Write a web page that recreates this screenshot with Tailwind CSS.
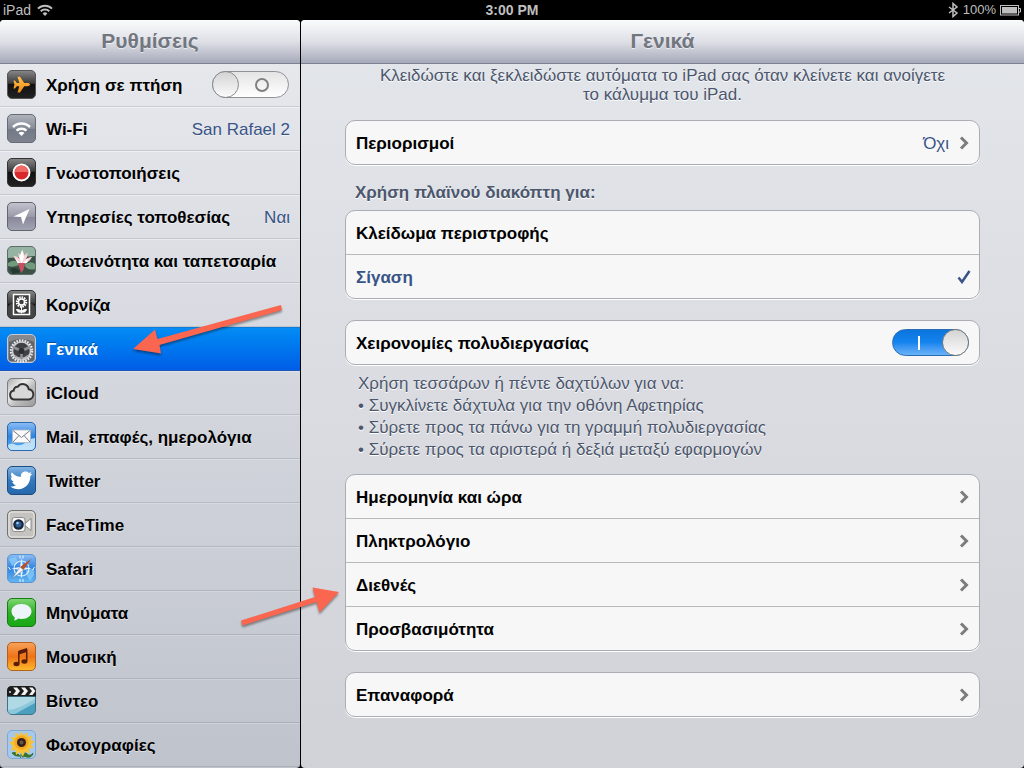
<!DOCTYPE html>
<html lang="el">
<head>
  <meta charset="UTF-8">
  <title>Ρυθμίσεις - Γενικά</title>
  <meta name="viewport" content="width=device-width, initial-scale=1.0">
  <script src="https://cdn.jsdelivr.net/npm/@tailwindcss/browser@4"></script>
</head>
<body class="bg-black h-screen flex flex-col overflow-hidden font-['Liberation_Sans',Arial,sans-serif] text-[17px] text-black">

  <!-- Gradients shared by the icons -->
  <svg class="absolute w-0 h-0" aria-hidden="true">
    <defs>
      <linearGradient id="black" x2="0" y2="1"><stop offset="0" stop-color="#888"/><stop offset=".45" stop-color="#3c3c3c"/><stop offset=".5" stop-color="#111"/><stop offset="1" stop-color="#222"/></linearGradient>
      <linearGradient id="gray" x2="0" y2="1"><stop offset="0" stop-color="#b0b4bd"/><stop offset=".5" stop-color="#868b96"/><stop offset=".52" stop-color="#737986"/><stop offset="1" stop-color="#7d828e"/></linearGradient>
      <linearGradient id="lilac" x2="0" y2="1"><stop offset="0" stop-color="#c3c4cf"/><stop offset=".5" stop-color="#9a9ba9"/><stop offset=".52" stop-color="#86889a"/><stop offset="1" stop-color="#a3a5b3"/></linearGradient>
      <linearGradient id="silver" x2="1" y2="1"><stop offset="0" stop-color="#aaa"/><stop offset=".35" stop-color="#eee"/><stop offset=".6" stop-color="#bbb"/><stop offset="1" stop-color="#999"/></linearGradient>
      <linearGradient id="blue" x2="0" y2="1"><stop offset="0" stop-color="#85b6e6"/><stop offset=".5" stop-color="#3379bd"/><stop offset="1" stop-color="#2667ab"/></linearGradient>
      <linearGradient id="sky" x2="0" y2="1"><stop offset="0" stop-color="#8cbef5"/><stop offset=".5" stop-color="#2f83e0"/><stop offset="1" stop-color="#63b9f5"/></linearGradient>
      <linearGradient id="green" x2="0" y2="1"><stop offset="0" stop-color="#7fd873"/><stop offset=".5" stop-color="#30ae28"/><stop offset="1" stop-color="#17a813"/></linearGradient>
      <linearGradient id="orange" x2="0" y2="1"><stop offset="0" stop-color="#f7a35a"/><stop offset=".5" stop-color="#ee7418"/><stop offset="1" stop-color="#fdba2c"/></linearGradient>
      <linearGradient id="plane" x2="0" y2="1"><stop offset="0" stop-color="#ffc04d"/><stop offset="1" stop-color="#f08a12"/></linearGradient>
    </defs>
  </svg>

  <!-- Status bar -->
  <div class="h-5 shrink-0 grid grid-cols-3 items-center px-[3px] text-sm leading-5 font-bold text-[#bfbfbf]">
    <div class="flex items-center gap-1.5">
      <span class="font-normal">iPad</span>
      <svg class="w-4 h-3" viewBox="0 0 16 12" fill="none" stroke="#bfbfbf" stroke-width="2"><path d="M1 4.600a10 10 0 0 1 14 0M3.700 7.300a6.200 6.200 0 0 1 8.600 0"/><path d="M8 12l-2.400-2.600a3.500 3.500 0 0 1 4.800 0z" fill="#bfbfbf" stroke="none"/></svg>
    </div>
    <span class="text-center">3:00 PM</span>
    <div class="flex items-center justify-end gap-1">
      <svg class="w-3 h-4" viewBox="0 0 12 16" fill="none" stroke="#bfbfbf" stroke-width="1.500"><path d="M2 5l8 6-4 3.500v-13L10 5l-8 6"/></svg>
      <span class="text-[13px] font-normal">100%</span>
      <svg class="w-[21px] h-[11px]" viewBox="0 0 21 11"><rect x=".5" y=".5" width="18" height="9.500" fill="none" stroke="#bfbfbf"/><rect x="2" y="2" width="15" height="6.500" fill="#bfbfbf"/><path d="M19 3.500h1.500v3.500H19" fill="none" stroke="#bfbfbf"/></svg>
    </div>
  </div>

  <div class="flex flex-1 min-h-0">

    <!-- Sidebar -->
    <aside class="w-[301px] shrink-0 border-r border-black">
      <div class="h-full flex flex-col overflow-hidden rounded-sm bg-linear-to-b from-[#e8eaee] to-[#bfc3cc]">
        <header class="relative z-10 h-11 shrink-0 flex items-center justify-center pb-0.5 border-b border-[#7c8095] bg-linear-to-b from-[#fafbfb] via-[#dfe0e7] to-[#a6a9b9]">
          <h1 class="text-[21px] font-bold text-[#71767f] [text-shadow:0_1px_0_#ffffff99]">Ρυθμίσεις</h1>
        </header>
        <nav class="-mt-px font-bold [text-shadow:0_1px_0_#ffffff80] [&_span]:pt-0.5 [&_a]:pb-px">
          <div class="h-11 flex items-center gap-2.5 pl-[7px] pr-[11px] border-b border-[#c9ccd2]">
            <svg class="size-[29px]" viewBox="0 0 29 29"><rect x=".5" y=".5" width="28" height="28" rx="4.500" fill="url(#black)" stroke="#555"/><path d="M23 14.600c0 1-1.200 1.700-2.500 1.700h-3.300L13 22.500h-2.500l1.800-6.200H9.800L8 18.600H6.500l.9-4L6.500 10.600H8l1.800 2.300h2.500L10.500 6.700H13l4.200 6.200h3.300c1.300 0 2.500.7 2.500 1.700z" fill="url(#plane)"/></svg>
            <label for="airplane" class="flex-1 pt-0.5">Χρήση σε πτήση</label>
            <input id="airplane" type="checkbox" role="switch" class="appearance-none relative w-[77px] h-[27px] rounded-full border border-[#8f9196] bg-linear-to-b from-[#e4e4e4] to-white before:absolute before:-left-px before:-top-px before:size-[27px] before:rounded-full before:border before:border-[#8b8b8b] before:bg-linear-to-b before:from-[#d4d4d4] before:to-[#fbfbfb] after:absolute after:right-[19px] after:top-[6px] after:size-[14px] after:rounded-full after:border-2 after:border-[#808080]">
          </div>
          <a href="#" class="h-11 flex items-center gap-2.5 pl-[7px] pr-2.5 border-t border-t-[#eef0f3] border-b border-b-[#c5c8cf]">
            <svg class="size-[29px]" viewBox="0 0 29 29"><rect x=".5" y=".5" width="28" height="28" rx="4.500" fill="url(#gray)" stroke="#666b75"/><g fill="none" stroke="#fff" stroke-width="2.500"><path d="M6 13a12 12 0 0 1 17 0M9.500 16.700a7.200 7.200 0 0 1 10 0"/></g><path d="M14.500 22l-3-3a4.200 4.200 0 0 1 6 0z" fill="#fff"/></svg>
            <span class="flex-1">Wi-Fi</span>
            <span class="font-normal text-[#385487]">San Rafael 2</span>
          </a>
          <a href="#" class="h-11 flex items-center gap-2.5 pl-[7px] pr-2.5 border-t border-t-[#eef0f3] border-b border-b-[#c5c8cf]">
            <svg class="size-[29px]" viewBox="0 0 29 29"><rect x=".5" y=".5" width="28" height="28" rx="4.500" fill="url(#black)" stroke="#333"/><circle cx="14.500" cy="14.500" r="8" fill="#d9282b" stroke="#fff" stroke-width="2"/><path d="M8 14a6.500 6.500 0 0 1 13 0z" fill="#f06a68"/></svg>
            <span>Γνωστοποιήσεις</span>
          </a>
          <a href="#" class="h-11 flex items-center gap-2.5 pl-[7px] pr-2.5 border-t border-t-[#ebedf0] border-b border-b-[#c3c6cd]">
            <svg class="size-[29px]" viewBox="0 0 29 29"><rect x=".5" y=".5" width="28" height="28" rx="4.500" fill="url(#lilac)" stroke="#62666f"/><path d="M22.500 7L16 22.500l-2-7.500-7.500-.5z" fill="#fff"/></svg>
            <span class="flex-1">Υπηρεσίες τοποθεσίας</span>
            <span class="font-normal text-[#385487]">Ναι</span>
          </a>
          <a href="#" class="h-11 flex items-center gap-2.5 pl-[7px] pr-2.5 border-t border-t-[#e9ebee] border-b border-b-[#c1c4cb]">
            <svg class="size-[29px]" viewBox="0 0 29 29"><rect x=".5" y=".5" width="28" height="28" rx="4.500" fill="#3c5145" stroke="#5e6e66"/><path d="M1 5q0-4 4-4h19q4 0 4 4v5L1 12z" fill="#94b3a2"/><path d="M1 17q7-5 13 1-7 4-13 2zM17 19q7-5 11-1v5q-7 2-11-4z" fill="#719b7c"/><path d="M3 23q6-3 11 3l-8 2z" fill="#243a33"/><path d="M14.500 18Q9 17 6.500 10q4 0 6 3-1.500-3-1-6l2.500 2.500 1.500-6 2 6 3-3q0 4-1.500 7 2.500-3 6-2.500-3 6-9.500 7z" fill="#f7d3d8"/><path d="M14.500 18l-2-7 2.500-7 2 7zM9 13l5.500 5-4-1zM21 12l-6 6 5-1z" fill="#fff"/><path d="M11 17h7l-1.500 7-2.500 3z" fill="#c84f62"/></svg>
            <span>Φωτεινότητα και ταπετσαρία</span>
          </a>
          <a href="#" class="h-11 flex items-center gap-2.5 pl-[7px] pr-2.5 border-t border-t-[#e6e8ec] border-b border-b-[#bfc3ca]">
            <svg class="size-[29px]" viewBox="0 0 29 29"><rect x=".5" y=".5" width="28" height="28" rx="4.500" fill="url(#black)" stroke="#333"/><rect x="1" y="14" width="27" height="14" rx="4" fill="#444"/><rect x="6.500" y="4.500" width="16" height="20" fill="#3c3c3c" stroke="#fff" stroke-width="1.500"/><circle cx="14.500" cy="12" r="4.500" fill="none" stroke="#fff" stroke-width="2.500" stroke-dasharray="1.500 .8"/><circle cx="14.500" cy="12" r="3" fill="none" stroke="#fff" stroke-width="1.500"/><path d="M14.500 16v7.500M14.500 22q-4 1-5-2.500 4-.5 5 2.500 1-3 5-2.500-1 3.500-5 2.500" fill="#fff" stroke="#fff"/></svg>
            <span>Κορνίζα</span>
          </a>
          <a href="#" aria-current="page" class="h-11 flex items-center gap-2.5 pl-[7px] pr-2.5 border-t border-t-[#0f7bdb] border-b border-b-[#1d56b5] bg-linear-to-b from-[#058cf5] to-[#015de6] text-white [text-shadow:0_-1px_0_#00000066]">
            <svg class="size-[29px]" viewBox="0 0 29 29"><rect x=".5" y=".5" width="28" height="28" rx="4.500" fill="#85888e" stroke="#c8cbd1"/><path d="M2 8q12-6 25 0v17q0 2-3 2H5q-3 0-3-2z" fill="#606368"/><circle cx="14.500" cy="17" r="10.500" fill="none" stroke="#eceded" stroke-width="2.500" stroke-dasharray="1.600 1.150"/><circle cx="14.500" cy="17" r="9" fill="#3f4145" stroke="#cfd0d3" stroke-width="1.500"/><path d="M7 20q7 7 15 0l-4 5h-7z" fill="#b9bbbf"/><path d="M14.500 17L6 13M14.500 17L23 13M14.500 17v8" stroke="#8e9095" stroke-width="2.500"/><circle cx="14.500" cy="17" r="3" fill="#2d2e31"/></svg>
            <span>Γενικά</span>
          </a>
          <a href="#" class="h-11 flex items-center gap-2.5 pl-[7px] pr-2.5 border-t border-t-[#e0e3e8] border-b border-b-[#bbbfc6]">
            <svg class="size-[29px]" viewBox="0 0 29 29"><rect x=".5" y=".5" width="28" height="28" rx="4.500" fill="url(#silver)" stroke="#7d7d7d"/><path d="M7.500 21.500a4.500 4.500 0 0 1-.8-8.900 3.700 3.700 0 0 1 4.100-3.800 6 6 0 0 1 10.900 2.400 5.200 5.200 0 0 1 .3 10.300z" fill="#d8d8d8" stroke="#343434" stroke-width="2"/></svg>
            <span>iCloud</span>
          </a>
          <a href="#" class="h-11 flex items-center gap-2.5 pl-[7px] pr-2.5 border-t border-t-[#dde0e5] border-b border-b-[#b9bcc4]">
            <svg class="size-[29px]" viewBox="0 0 29 29"><rect x=".5" y=".5" width="28" height="28" rx="4.500" fill="url(#sky)" stroke="#2b69ae"/><path d="M1 23q4-3 8 0 5 1 9-2 3-4 10-5v7q0 5-5 5H6q-5 0-5-5z" fill="#d8effd" opacity=".8"/><path d="M5.500 8h18v12.500h-18z" fill="#fafafa" stroke="#aeb6c2" stroke-width=".8"/><path d="M6 8.500l8.500 7 8.500-7M6 20l6-6.500M23 20l-6-6.500" fill="none" stroke="#777d86"/></svg>
            <span>Mail, επαφές, ημερολόγια</span>
          </a>
          <a href="#" class="h-11 flex items-center gap-2.5 pl-[7px] pr-2.5 border-t border-t-[#dadde2] border-b border-b-[#b6bac2]">
            <svg class="size-[29px]" viewBox="0 0 29 29"><rect x=".5" y=".5" width="28" height="28" rx="4.500" fill="url(#blue)" stroke="#1c4d82"/><path d="M3.500 20.500c3 .2 4.300-.6 5.500-1.500-2-.2-3.200-1.500-3.700-3h1.500c-2-1-3-2.600-3-4.700l1.600.5C3.800 10 3.700 8 4.700 6.200c2.600 3 5.700 4.500 9.200 4.700-.4-3 1.600-5.400 4.400-5.400 1.500 0 2.600.5 3.500 1.400l2.700-1-1.500 2.300 2.500-.5-2.200 2.300c.2 7-4.500 13.200-12 13.200-3 0-5.700-1-7.800-2.700z" fill="#fff"/></svg>
            <span>Twitter</span>
          </a>
          <a href="#" class="h-11 flex items-center gap-2.5 pl-[7px] pr-2.5 border-t border-t-[#d7dadf] border-b border-b-[#b4b8c0]">
            <svg class="size-[29px]" viewBox="0 0 29 29"><rect x=".5" y=".5" width="28" height="28" rx="4.500" fill="#c4c3bf" stroke="#73726f"/><rect x="2" y="2" width="25" height="25" rx="3" fill="none" stroke="#e8e8e5"/><path d="M17 14.500l7-6v12z" fill="#fff" stroke="#777" stroke-width=".8"/><rect x="5" y="7.500" width="13" height="14" rx="2.500" fill="#f5f5f5" stroke="#777" stroke-width=".8"/><circle cx="11.500" cy="14.500" r="5.300" fill="#17263c"/><circle cx="11.500" cy="14.500" r="3" fill="#2d5e96"/><circle cx="10.500" cy="13" r="1.300" fill="#9ac5ee"/></svg>
            <span>FaceTime</span>
          </a>
          <a href="#" class="h-11 flex items-center gap-2.5 pl-[7px] pr-2.5 border-t border-t-[#d5d8dd] border-b border-b-[#b2b5be]">
            <svg class="size-[29px]" viewBox="0 0 29 29"><rect x=".5" y=".5" width="28" height="28" rx="4.500" fill="url(#sky)" stroke="#5a93cf"/><path d="M19 16l8-1v6l-4 6-3-5zM2 5l7-2 2 6-6 3z" fill="#8fd0f8" opacity=".7"/><circle cx="14.500" cy="14.500" r="7.500" fill="none" stroke="#d4edff" stroke-width="1.200"/><path d="M14.500 4l1.500 9 9 1.500-9 1.500-1.500 9-1.500-9-9-1.500 9-1.500z" fill="#e8f6ff"/><path d="M13 1.500v3M16 1.500v3M13 25v3M16 25v3M1.500 13l2 3M27.500 13l-2 3" stroke="#e8f6ff"/><path d="M24.500 4.500L16.500 16l-3.500-3z" fill="#b5532f"/><path d="M5 24.500L13 13l3.500 3z" fill="#f4f4f4" stroke="#6c7f95" stroke-width=".5"/></svg>
            <span>Safari</span>
          </a>
          <a href="#" class="h-11 flex items-center gap-2.5 pl-[7px] pr-2.5 border-t border-t-[#d3d6db] border-b border-b-[#b0b3bc]">
            <svg class="size-[29px]" viewBox="0 0 29 29"><rect x=".5" y=".5" width="28" height="28" rx="4.500" fill="url(#green)" stroke="#197b18"/><path d="M14.500 6c6 0 10 3.200 10 7.500s-4 7.500-10 7.500c-1.200 0-2.400-.2-3.500-.5-1 1.300-2.500 2-4.200 2 .7-.8 1.100-2 .9-3.300-2-1.400-3.200-3.500-3.200-5.700C4.500 9.200 8.500 6 14.500 6z" fill="#eef5fa"/></svg>
            <span>Μηνύματα</span>
          </a>
          <a href="#" class="h-11 flex items-center gap-2.5 pl-[7px] pr-2.5 border-t border-t-[#d1d4da] border-b border-b-[#aeb2bb]">
            <svg class="size-[29px]" viewBox="0 0 29 29"><rect x=".5" y=".5" width="28" height="28" rx="4.500" fill="url(#orange)" stroke="#b4611e"/><path d="M12 8.500l8-2.500v4l-8 2.500z" fill="#5a1d08"/><path d="M11.800 9v12.500M19.700 7v12" stroke="#5a1d08" stroke-width="1.500"/><ellipse cx="9.500" cy="22" rx="3" ry="2.200" fill="#5a1d08"/><ellipse cx="17.400" cy="19.500" rx="3" ry="2.200" fill="#5a1d08"/></svg>
            <span>Μουσική</span>
          </a>
          <a href="#" class="h-11 flex items-center gap-2.5 pl-[7px] pr-2.5 border-t border-t-[#cfd2d8] border-b border-b-[#acb0b9]">
            <svg class="size-[29px]" viewBox="0 0 29 29"><rect x=".5" y=".5" width="28" height="28" rx="4.500" fill="#4a9fbe" stroke="#3f7385"/><path d="M1 11h27v6L8 28H5q-4 0-4-4z" fill="#8cc8da"/><path d="M1 24q9 0 27-11v-2H1z" fill="#c5e5ec" opacity=".6"/><path d="M0 10.500V5q0-5 5-5h19q5 0 5 5v5.500z" fill="#1c1c1c"/><path d="M6 1.500h4l3 3.500-3 4H6l3-4zM14 1.500h4l3 3.500-3 4h-4l3-4zM22 1.500h3.500l3 3.500-3 4H22l3-4z" fill="#f1f1f1"/><circle cx="3" cy="6" r="1" fill="#ddd"/></svg>
            <span>Βίντεο</span>
          </a>
          <a href="#" class="h-11 flex items-center gap-2.5 pl-[7px] pr-2.5 border-t border-t-[#ced1d7] border-b border-b-[#acb0b9]">
            <svg class="size-[29px]" viewBox="0 0 29 29"><rect x=".5" y=".5" width="28" height="28" rx="4.500" fill="#a5c9ee" stroke="#7da7d4"/><path d="M14.500 16q1 6-1 12M13 26q-4-5-8-3 3 4 8 3M15 26q3-5 5-2 3 3 6-1-1 5-6 4-2-1-5 0" fill="#38742d" stroke="#38742d"/><path d="M14.500 1l2 4.500 4-3.500v5l5-1.500-2 4.500 4.500 1.500-4 3 3 3.500-5 .5.5 5-4.500-2-2 5-3-4.500-4 3-.5-5-5 .5 2.500-4.500L2 12.500 6.500 11l-3-4 5 .5L8 2l4.500 3.500z" fill="#f8c234"/><circle cx="14.500" cy="12.500" r="7" fill="#f4a81f"/><circle cx="14.500" cy="12.500" r="4.500" fill="#33211a"/><circle cx="14.500" cy="12.500" r="2" fill="#6a5547"/></svg>
            <span>Φωτογραφίες</span>
          </a>
        </nav>
      </div>
    </aside>

    <!-- Detail pane -->
    <main class="flex-1 min-w-0 overflow-hidden rounded-sm bg-linear-to-b from-[#e3e6eb] to-[#d1d2d7]">
      <header class="h-11 flex items-center justify-center pb-0.5 border-b border-[#7c8095] bg-linear-to-b from-[#fafbfb] via-[#dfe0e7] to-[#a6a9b9]">
        <h2 class="text-[21px] font-bold text-[#71767f] [text-shadow:0_1px_0_#ffffff99]">Γενικά</h2>
      </header>

      <div class="px-11 pt-0.5 [&_span]:pt-0.5">
        <p class="text-center leading-[19px] text-[#4c566c] [text-shadow:0_1px_0_#fff]">Κλειδώστε και ξεκλειδώστε αυτόματα το iPad σας όταν κλείνετε και ανοίγετε<br>το κάλυμμα του iPad.</p>

        <section class="mt-4 rounded-[10px] border border-[#abadb3] bg-[#f7f7f7] shadow-[0_1px_0_#fff]">
          <a href="#" class="h-[43px] flex items-center px-2.5">
            <span class="flex-1 font-bold">Περιορισμοί</span>
            <span class="mr-2.5 text-[#385487]">Όχι</span>
            <svg class="w-2.5 h-3.5" viewBox="0 0 10 14" fill="none" stroke="#7c7c7c" stroke-width="3"><path d="M2 1.500L7.500 7 2 12.500"/></svg>
          </a>
        </section>

        <fieldset>
          <legend class="pt-4 pb-[5px] pl-2.5 font-bold leading-6 text-[#4c566c] [text-shadow:0_1px_0_#fff]">Χρήση πλαϊνού διακόπτη για:</legend>
          <div class="rounded-[10px] border border-[#abadb3] bg-[#f7f7f7] shadow-[0_1px_0_#fff] font-bold">
            <label class="h-11 flex items-center pl-2.5 pr-2 border-b border-[#b8b9bd] has-checked:text-[#385487]">
              <span class="flex-1">Κλείδωμα περιστροφής</span>
              <input type="radio" name="side-switch" class="peer appearance-none">
              <svg class="hidden peer-checked:block w-3.5 h-3.5" viewBox="0 0 14 14" fill="none" stroke="#385487" stroke-width="2.500"><path d="M1.500 7.500L5 12 12.500 1"/></svg>
            </label>
            <label class="h-[43px] flex items-center pl-2.5 pr-2 has-checked:text-[#385487]">
              <span class="flex-1">Σίγαση</span>
              <input type="radio" name="side-switch" class="peer appearance-none" checked>
              <svg class="hidden peer-checked:block w-3.5 h-3.5" viewBox="0 0 14 14" fill="none" stroke="#385487" stroke-width="2.500"><path d="M1.500 7.500L5 12 12.500 1"/></svg>
            </label>
          </div>
        </fieldset>

        <section class="mt-[21px] rounded-[10px] border border-[#abadb3] bg-[#f7f7f7] shadow-[0_1px_0_#fff]">
          <div class="h-[43px] flex items-center px-2.5">
            <label for="gestures" class="flex-1 pt-0.5 font-bold">Χειρονομίες πολυδιεργασίας</label>
            <input id="gestures" type="checkbox" role="switch" checked class="appearance-none relative w-[77px] h-[27px] rounded-full border border-[#2a6cb5] bg-linear-to-b from-[#0b74dd] via-[#1484ee] to-[#68b2f8] before:absolute before:-right-px before:-top-px before:size-[27px] before:rounded-full before:border before:border-[#7b7b7b] before:bg-linear-to-b before:from-[#d4d4d4] before:to-[#fbfbfb] after:absolute after:left-[25px] after:top-[6px] after:w-0.5 after:h-3.5 after:bg-white">
          </div>
        </section>

        <div class="mt-2 pl-[13px] leading-[22px] text-[#4c566c] [text-shadow:0_1px_0_#fff]">
          <p>Χρήση τεσσάρων ή πέντε δαχτύλων για να:</p>
          <ul>
            <li>• Συγκλίνετε δάχτυλα για την οθόνη Αφετηρίας</li>
            <li>• Σύρετε προς τα πάνω για τη γραμμή πολυδιεργασίας</li>
            <li>• Σύρετε προς τα αριστερά ή δεξιά μεταξύ εφαρμογών</li>
          </ul>
        </div>

        <section class="mt-[13px] rounded-[10px] border border-[#abadb3] bg-[#f7f7f7] shadow-[0_1px_0_#fff] font-bold">
          <a href="#" class="h-11 flex items-center px-2.5 border-b border-[#b8b9bd]">
            <span class="flex-1">Ημερομηνία και ώρα</span>
            <svg class="w-2.5 h-3.5" viewBox="0 0 10 14" fill="none" stroke="#7c7c7c" stroke-width="3"><path d="M2 1.500L7.500 7 2 12.500"/></svg>
          </a>
          <a href="#" class="h-11 flex items-center px-2.5 border-b border-[#b8b9bd]">
            <span class="flex-1">Πληκτρολόγιο</span>
            <svg class="w-2.5 h-3.5" viewBox="0 0 10 14" fill="none" stroke="#7c7c7c" stroke-width="3"><path d="M2 1.500L7.500 7 2 12.500"/></svg>
          </a>
          <a href="#" class="h-11 flex items-center px-2.5 border-b border-[#b8b9bd]">
            <span class="flex-1">Διεθνές</span>
            <svg class="w-2.5 h-3.5" viewBox="0 0 10 14" fill="none" stroke="#7c7c7c" stroke-width="3"><path d="M2 1.500L7.500 7 2 12.500"/></svg>
          </a>
          <a href="#" class="h-[43px] flex items-center px-2.5">
            <span class="flex-1">Προσβασιμότητα</span>
            <svg class="w-2.5 h-3.5" viewBox="0 0 10 14" fill="none" stroke="#7c7c7c" stroke-width="3"><path d="M2 1.500L7.500 7 2 12.500"/></svg>
          </a>
        </section>

        <section class="mt-[21px] rounded-[10px] border border-[#abadb3] bg-[#f7f7f7] shadow-[0_1px_0_#fff] font-bold">
          <a href="#" class="h-[43px] flex items-center px-2.5">
            <span class="flex-1">Επαναφορά</span>
            <svg class="w-2.5 h-3.5" viewBox="0 0 10 14" fill="none" stroke="#7c7c7c" stroke-width="3"><path d="M2 1.500L7.500 7 2 12.500"/></svg>
          </a>
        </section>
      </div>
    </main>
  </div>

  <!-- Pointer arrows over both panes -->
  <svg class="absolute left-0 top-0 z-20 w-[400px] h-[660px] pointer-events-none drop-shadow-[0_2px_1px_#00000066]" viewBox="0 0 400 660" fill="#fb6650" aria-hidden="true">
    <path d="M133 349l22-19.500 2.500 9.500L281 305l1 5-122.500 35 1.500 8.500z"/>
    <path d="M339 592l-26.500-4.500 2.500 9.500-74 23.500 1.500 5L316.500 602l3 10.500z"/>
  </svg>
</body>
</html>
